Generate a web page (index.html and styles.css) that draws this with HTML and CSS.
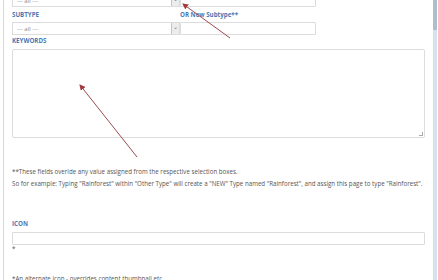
FILE: index.html
```html
<!DOCTYPE html>
<html lang="en">
<head>
  <meta charset="UTF-8" />
  <title>Edit Page</title>
  <link rel="stylesheet" href="styles.css">
</head>
<body>

  <div class="page">
    <div class="form">

      <div class="pair top">
        <div class="select"><span>--- all ---</span><span class="drop">&#8964;</span></div>
        <div class="field"></div>
      </div>

      <div class="pair labels">
        <label class="lbl">SUBTYPE</label>
        <label class="lbl">OR New Subtype**</label>
      </div>
      <div class="pair">
        <div class="select"><span>--- all ---</span><span class="drop">&#8964;</span></div>
        <div class="field"></div>
      </div>

      <label class="lbl kw">KEYWORDS</label>
      <div class="area"><span class="grip"></span></div>

      <p class="note first">**These fields overide any value assigned from the respective selection boxes.</p>
      <p class="note">So for example: Typing "Rainforest" within "Other Type" will create a "NEW" Type named "Rainforest", and assign this page to type "Rainforest".</p>

      <label class="lbl icon">ICON</label>
      <div class="field wide"></div>
      <p class="note star">*</p>
      <p class="note last">*An alternate icon - overrides content thumbnail etc.</p>
    </div>

    <div class="scroll"><div class="thumb"></div></div>

    <svg class="marks" width="438" height="280" viewBox="0 0 438 280">
      <defs>
        <marker id="head" markerWidth="6" markerHeight="6" refX="5" refY="3" orient="auto" markerUnits="userSpaceOnUse">
          <path d="M0,0 L6,3 L0,6 z" fill="#a33a3e"/>
        </marker>
      </defs>
      <line x1="230" y1="38" x2="183" y2="4" stroke="#9c4a50" stroke-width="1" marker-end="url(#head)"/>
      <line x1="137" y1="157" x2="80" y2="85" stroke="#9c4a50" stroke-width="1" marker-end="url(#head)"/>
    </svg>
  </div>

</body>
</html>
```

FILE: styles.css
```css
body {
  margin: 0;
  background-color: #fff;
  font-family: "Open Sans", Arial, sans-serif;
  overflow: hidden;
}
.page {
  position: relative;
  width: 438px;
  height: 280px;
  display: flex;
}
.form {
  width: 413px;
  margin-top: -6px;
  border-left: 1px solid #c9d9e6;
  margin-left: 3px;
  padding-left: 8px;
}
.pair {
  display: grid;
  grid-template-columns: 168px 136px;
}
.select {
  height: 11px;
  border: 1px solid #dcdcdc;
  display: flex;
  align-items: center;
  justify-content: space-between;
  font-size: 6px;
  color: #8a8a8a;
  padding-left: 4px;
}
.drop {
  width: 7px;
  height: 11px;
  border-left: 1px solid #c4c4c4;
  background-color: #ececec;
  color: #777;
  font-size: 6px;
  line-height: 8px;
  text-align: center;
}
.field {
  height: 11px;
  border: 1px solid #dcdcdc;
  border-radius: 1px;
}
.field.wide {
  width: 411px;
}
.labels {
  margin-top: 4px;
  height: 8px;
  margin-bottom: 3px;
}
.lbl {
  display: block;
  font-size: 6.2px;
  font-weight: bold;
  color: #4a79b4;
  line-height: 8px;
}
.kw {
  margin-top: 2px;
  margin-bottom: 4px;
}
.area {
  position: relative;
  width: 411px;
  height: 87px;
  border: 1px solid #dcdcdc;
  border-radius: 2px;
}
.grip {
  position: absolute;
  right: 1px;
  bottom: 1px;
  width: 3px;
  height: 3px;
  border-right: 1px solid #aaa;
  border-bottom: 1px solid #aaa;
}
.note {
  margin: 0;
  font-size: 6.2px;
  line-height: 12px;
  color: #555;
  white-space: nowrap;
}
.note.first {
  margin-top: 28px;
}
.icon {
  margin-top: 30px;
  margin-bottom: 4px;
}
.star {
  line-height: 8px;
}
.last {
  margin-top: 20px;
}
.scroll {
  margin-left: 8px;
  width: 4px;
  height: 280px;
  background-color: #d6e2ec;
}
.thumb {
  height: 30px;
  background-color: #aebfcc;
}
.marks {
  position: absolute;
  left: 0;
  top: 0;
}
```
